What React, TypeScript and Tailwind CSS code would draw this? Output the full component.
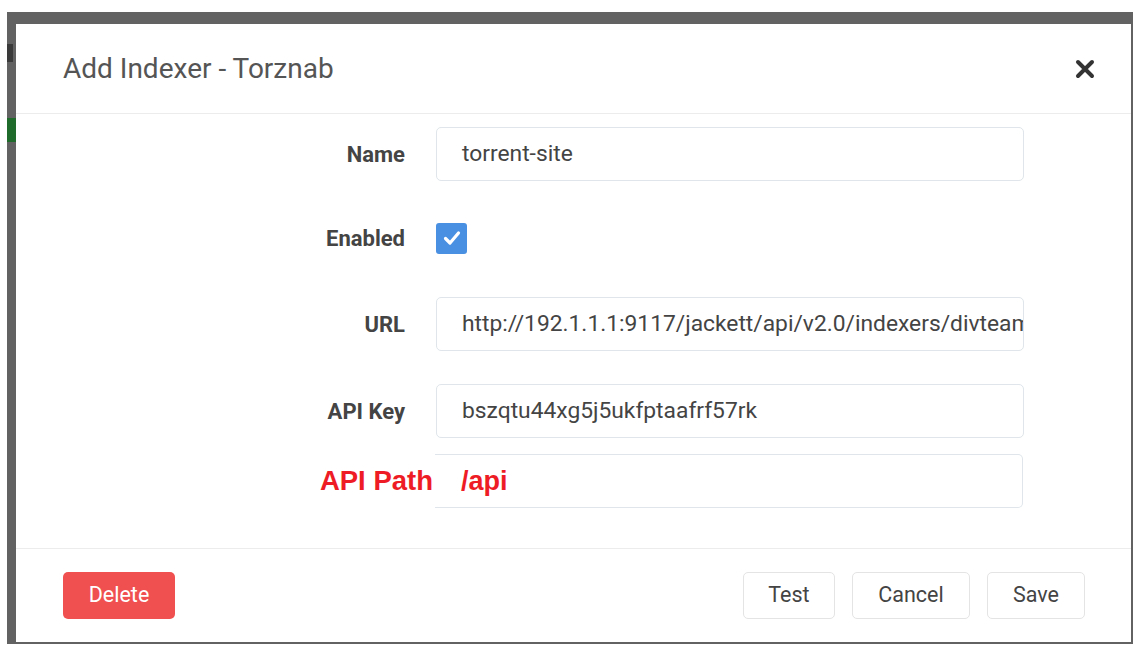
import React from "react";

const roboto = { fontFamily: "Roboto, 'Noto Sans', sans-serif" };
const arial = { fontFamily: "'Liberation Sans', Arial, sans-serif" };

function Label({ children }: { children: React.ReactNode }) {
  return <div className="w-[420px] shrink-0 pr-[31px] text-right text-[22px] font-bold text-[#444]">{children}</div>;
}

function Field({ label, value }: { label: string; value: string }) {
  return (
    <div className="flex items-center">
      <Label>{label}</Label>
      <div className="flex h-[54px] w-[588px] items-center overflow-hidden whitespace-nowrap rounded-[5px] border border-[#dfe5ea] pl-[25px] text-[22.8px] text-[#444]">
        {value}
      </div>
    </div>
  );
}

function CloseIcon() {
  return (
    <svg width="20" height="20" viewBox="0 0 20 20" className="text-[#333]">
      <path d="M3 3 L17 17 M17 3 L3 17" stroke="currentColor" strokeWidth="4" strokeLinecap="round" />
    </svg>
  );
}

function Btn({ children, w }: { children: React.ReactNode; w: string }) {
  return (
    <button className={`${w} h-[47px] rounded-[5px] border border-[#e4e4e4] bg-white text-[21.5px] text-[#444]`}>
      {children}
    </button>
  );
}

export default function App() {
  return (
    <div className="h-[646px] w-[1134px] overflow-hidden bg-white pl-[7px] pt-[12px]" style={roboto}>
      <div className="flex w-[1126px] flex-col bg-[#626262] pb-[2px] pr-[2px]">
        <div className="h-[12px]" />
        <div className="flex">
          {/* page behind the backdrop, mostly hidden */}
          <div className="flex w-[9px] shrink-0 flex-col overflow-hidden">
            <div className="mt-[20px] h-[18px] w-[6px] bg-[#3a3a3a]" />
            <div className="mt-[56px] h-[24px] w-[9px] bg-[#1e6b2c]" />
          </div>
          <div className="flex h-[618px] w-[1115px] flex-col bg-white">
            {/* header */}
            <div className="flex h-[90px] shrink-0 items-center justify-between border-b border-[#ececec] pl-[47px] pr-[36px]">
              <div className="text-[28px] text-[#555]">Add Indexer - Torznab</div>
              <CloseIcon />
            </div>
            {/* body */}
            <div className="flex flex-1 flex-col pt-[13px]">
              <Field label="Name" value="torrent-site" />
              <div className="mt-[30px] flex h-[54px] items-center">
                <Label>Enabled</Label>
                <div className="flex h-[31px] w-[31px] items-center justify-center rounded-[3px] bg-[#4a90e2]">
                  <svg width="22" height="22" viewBox="0 0 22 22">
                    <path d="M4.5 11.5 L9 16 L17.5 6" fill="none" stroke="white" strokeWidth="3.2" strokeLinecap="round" strokeLinejoin="round" />
                  </svg>
                </div>
              </div>
              <div className="mt-[32px]">
                <Field label="URL" value="http://192.1.1.1:9117/jackett/api/v2.0/indexers/divteam" />
              </div>
              <div className="mt-[33px]">
                <Field label="API Key" value="bszqtu44xg5j5ukfptaafrf57rk" />
              </div>
              <div className="mt-[16px] flex items-center">
                <div className="w-[419px] shrink-0 pr-[2px] text-right text-[27.5px] font-bold text-[#ee1c25]" style={arial}>
                  API Path
                </div>
                <div className="flex h-[54px] w-[588px] items-center rounded-r-[5px] border-y border-r border-[#dfe5ea] border-l-white pl-[26px]">
                  <span className="text-[27px] font-bold text-[#ee1c25]" style={arial}>
                    /api
                  </span>
                </div>
              </div>
            </div>
            {/* footer */}
            <div className="flex h-[94px] shrink-0 items-center justify-between border-t border-[#ececec] pl-[47px] pr-[46px]">
              <button className="h-[47px] w-[112px] rounded-[5px] bg-[#f05050] text-[21.5px] text-white">Delete</button>
              <div className="flex gap-[17px]">
                <Btn w="w-[92px]">Test</Btn>
                <Btn w="w-[118px]">Cancel</Btn>
                <Btn w="w-[98px]">Save</Btn>
              </div>
            </div>
          </div>
        </div>
      </div>
    </div>
  );
}
